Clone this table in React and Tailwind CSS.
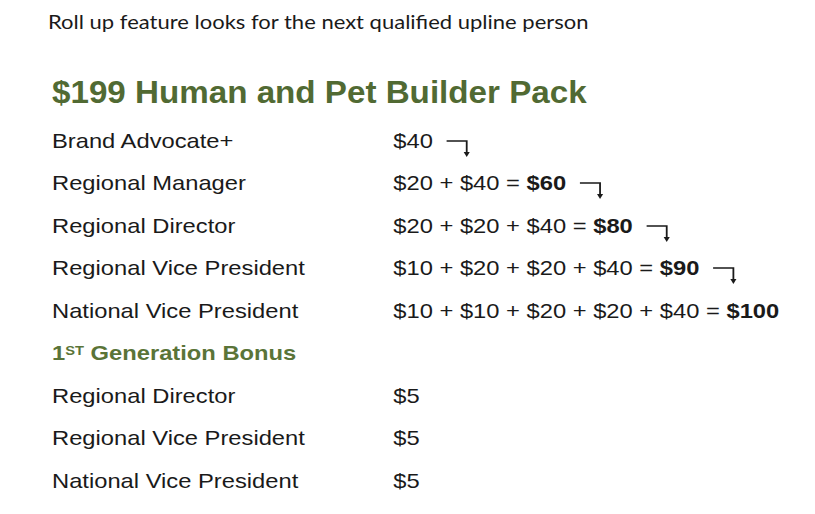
import React from "react";

function Arrow() {
  return (
    <span className="relative inline-block w-[34px] h-[10px] align-middle">
      <svg className="absolute left-[12px] top-[3px]" width="24" height="20" viewBox="0 0 24 20" fill="none">
        <path d="M0 1 H18 V13" stroke="#1a1a1a" strokeWidth="1.6" />
        <path d="M15.3 12 L18 17 L20.7 12 Z" fill="#1a1a1a" />
      </svg>
    </span>
  );
}

const rows = [
  ["Brand Advocate+", <>$40<Arrow /></>],
  ["Regional Manager", <>$20 + $40 = <b>$60</b><Arrow /></>],
  ["Regional Director", <>$20 + $20 + $40 = <b>$80</b><Arrow /></>],
  ["Regional Vice President", <>$10 + $20 + $20 + $40 = <b>$90</b><Arrow /></>],
  ["National Vice President", <>$10 + $10 + $20 + $20 + $40 = <b>$100</b></>],
];

const bonus = [
  ["Regional Director", "$5"],
  ["Regional Vice President", "$5"],
  ["National Vice President", "$5"],
];

function Row({ label, value }) {
  return (
    <div className="flex items-center h-[42.5px]">
      <div className="w-[302px]">{label}</div>
      <div className="whitespace-nowrap">{value}</div>
    </div>
  );
}

export default function App() {
  return (
    <div className="w-[815px] h-[514px] bg-white overflow-hidden text-[#1a1a1a]">
      <div className="pl-[48px] pt-[6px] h-[40px]">
        <div className="text-[20px] font-['Lato',sans-serif] whitespace-nowrap scale-x-[1.1] origin-left">
          Roll up feature looks for the next qualified upline person
        </div>
      </div>
      <div className="pl-[52px] mt-[31px] h-[44px]">
        <div className="text-[31px] font-bold text-[#516a33] font-['Liberation_Sans',Arial,sans-serif] leading-[44px] whitespace-nowrap scale-x-[1.07] origin-left">
          $199 Human and Pet Builder Pack
        </div>
      </div>
      <div className="pl-[52px] mt-[4px]">
        <div className="text-[21px] font-['Liberation_Sans',Arial,sans-serif] scale-x-[1.13] origin-left">
          {rows.map(([l, v], i) => (
            <Row key={i} label={l} value={v} />
          ))}
          <div className="flex items-center h-[42.5px] font-bold text-[#5a7438] text-[21px]">
            1<sup className="text-[13px] relative top-[-2px]">ST</sup>&nbsp;Generation Bonus
          </div>
          {bonus.map(([l, v], i) => (
            <Row key={i} label={l} value={v} />
          ))}
        </div>
      </div>
    </div>
  );
}
